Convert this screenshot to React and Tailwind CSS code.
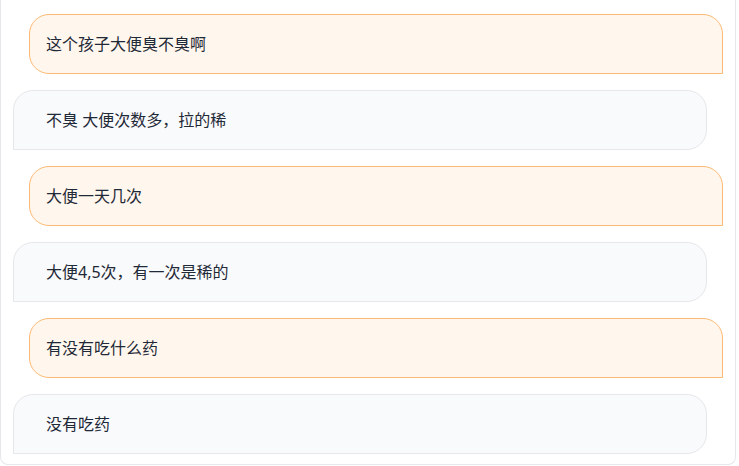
import React from "react";

const messages = [
  { role: "user", text: "这个孩子大便臭不臭啊" },
  { role: "bot", text: "不臭 大便次数多，拉的稀" },
  { role: "user", text: "大便一天几次" },
  { role: "bot", text: "大便4,5次，有一次是稀的" },
  { role: "user", text: "有没有吃什么药" },
  { role: "bot", text: "没有吃药" },
];

export default function App() {
  return (
    <div
      className="w-[736px] bg-white border-x border-b border-gray-200 rounded-b-lg px-3 pt-[14px] pb-[10px] flex flex-col gap-4"
      style={{ fontFamily: '"Noto Sans", "Noto Sans CJK SC", sans-serif' }}
    >
      {messages.map((m, i) =>
        m.role === "user" ? (
          <div
            key={i}
            className="ml-4 h-[60px] flex items-center pl-4 pr-4 bg-[#fff7ed] border border-[#fdba74] rounded-[20px] rounded-br-none text-[16px] text-[#1f2937]"
          >
            {m.text}
          </div>
        ) : (
          <div
            key={i}
            className="mr-4 h-[60px] flex items-center pl-8 pr-4 bg-[#f9fafb] border border-[#e5e7eb] rounded-[20px] rounded-bl-none text-[16px] text-[#1f2937]"
          >
            {m.text}
          </div>
        )
      )}
    </div>
  );
}
